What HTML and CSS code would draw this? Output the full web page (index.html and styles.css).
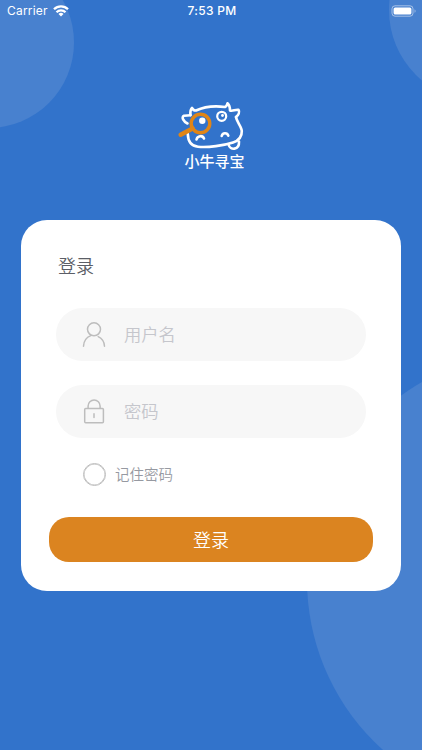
FILE: index.html
```html
<!DOCTYPE html>
<html lang="zh-CN">
<head>
    <meta charset="UTF-8">
    <meta name="viewport" content="width=device-width, initial-scale=1.0">
    <title>登录</title>
    <link rel="stylesheet" href="styles.css">
</head>
<body>
    <div class="login-page">
        <!-- 背景装饰 -->
        <div class="bubble bubble-left"></div>
        <div class="bubble bubble-right"></div>
        <div class="bubble bubble-bottom"></div>

        <!-- 状态栏 -->
        <header class="status-bar">
            <div class="status-left">
                <span class="carrier">Carrier</span>
                <svg class="wifi" width="16" height="12" viewBox="0 0 16 12" fill="none" stroke="#fff" stroke-width="2.3">
                    <path d="M1 4.3a10 10 0 0 1 14 0"/>
                    <path d="M3.5 7.2a6.4 6.4 0 0 1 9 0"/>
                    <path d="M8 11.5 5.5 9a3.6 3.6 0 0 1 5 0z" fill="#fff" stroke="none"/>
                </svg>
            </div>
            <span class="time">7:53 PM</span>
            <div class="status-right">
                <svg width="26" height="12" viewBox="0 0 26 12">
                    <rect x="1" y=".8" width="21" height="10.4" rx="3" fill="none" stroke="#fff" stroke-opacity=".5"/>
                    <rect x="2.6" y="2.4" width="17.8" height="7.2" rx="1.6" fill="#fff"/>
                    <path d="M23.6 4.2v3.6c1.2-.5 1.2-3.1 0-3.6z" fill="#fff" fill-opacity=".55"/>
                </svg>
            </div>
        </header>

        <div class="logo">
            <svg width="82" height="54" viewBox="0 0 82 54" fill="none" stroke-linecap="round" stroke-linejoin="round">
                <g stroke="#fff" stroke-width="2.6">
                    <path d="M20.5 15.2C20.2 12.5 20.500 9.500 22 8C23 9.800 24.200 10.600 26 10.500C34 6.800 46 5.800 55 7C56.200 6.500 57 5 57.500 3.300C59.500 5 60 7.500 60 10.500C63 11.500 65 9.300 68.500 9.800C70 12 68.500 15 66 17"/>
                    <path d="M66 17C66.500 21.500 71.500 26.500 71.800 31C72 36.500 69 40.500 63 42.500C54 45.500 38 47.800 28 46.800C21 46 18 41.500 17.800 34"/>
                    <path d="M20.500 15.200L14 15.700C11 17 13.500 21.500 17.500 23.500"/>
                    <path d="M58.500 44.500C60 50.500 69.500 50.500 69 41.500"/>
                    <circle cx="51.700" cy="16.300" r="4.500" stroke-width="2.2"/>
                    <path d="M26.500 39.500C27.500 35.500 32.500 35 34 38.500"/>
                    <path d="M51.700 36C52.500 32.500 57.300 32.300 58.300 35.700"/>
                </g>
                <circle cx="52.500" cy="15.500" r="1.400" fill="#fff"/>
                <circle cx="30.500" cy="23.500" r="9.300" fill="#3273cb" stroke="#e08516" stroke-width="3.4"/>
                <path d="M22.500 28.500L10.700 34.700" stroke="#e08516" stroke-width="4.6"/>
                <circle cx="32.300" cy="20.700" r="3.200" fill="#fff"/>
            </svg>
            <p class="logo-name">小牛寻宝</p>
        </div>

        <main class="login-card">
            <h1 class="login-title">登录</h1>
            <form class="login-form">
                <label class="input-group">
                    <svg class="input-icon" width="24" height="28" viewBox="0 0 24 28" fill="none" stroke="#bdbdbd" stroke-width="1.5" stroke-linecap="round">
                        <circle cx="12" cy="8.3" r="6.5"/>
                        <path d="M1.500 25.200C1.700 20 4.500 16.300 8.800 14.600M16.200 15.600C20 17.400 22.300 20.600 22.500 25.200"/>
                    </svg>
                    <input type="text" name="username" placeholder="用户名">
                </label>
                <label class="input-group">
                    <svg class="input-icon" width="24" height="28" viewBox="0 0 24 28" fill="none" stroke="#bdbdbd" stroke-width="1.5" stroke-linecap="round">
                        <rect x="2.7" y="10.5" width="18.7" height="14.2" rx="1"/>
                        <path d="M6.100 10.300V8a6 6 0 0 1 12 0V10.300M12 15.800v3.800"/>
                    </svg>
                    <input type="password" name="password" placeholder="密码">
                </label>
                <label class="remember">
                    <input type="checkbox" name="remember">
                    <span>记住密码</span>
                </label>
                <button type="button" class="login-button">登录</button>
            </form>
        </main>
    </div>
</body>
</html>
```
FILE: styles.css
```css
* {
    margin: 0;
    padding: 0;
    box-sizing: border-box;
}

body {
    font-family: "Noto Sans CJK SC", sans-serif;
    background: #3273cb;
}

.login-page {
    position: relative;
    height: 750px;
    overflow: hidden;
}

.bubble {
    position: absolute;
    border-radius: 50%;
    background: #4881cf;
}

.bubble-left {
    left: -97px;
    top: -43px;
    width: 171px;
    height: 171px;
}

.bubble-right {
    left: 389px;
    top: -82px;
    width: 184px;
    height: 184px;
}

.bubble-bottom {
    left: 306.5px;
    top: 352px;
    width: 456px;
    height: 456px;
}

.status-bar {
    position: relative;
    display: grid;
    grid-template-columns: 1fr auto 1fr;
    align-items: center;
    height: 22px;
    padding: 0 5px 0 7px;
    color: #ffffff;
    font-family: Inter, sans-serif;
    font-size: 12px;
    line-height: 22px;
}

.status-left {
    display: flex;
    align-items: center;
    gap: 5px;
}

.carrier {
    letter-spacing: 0.2px;
}

.time {
    font-weight: 500;
    letter-spacing: 0.3px;
}

.status-right {
    display: flex;
    justify-content: flex-end;
}

.logo {
    position: relative;
    display: flex;
    flex-direction: column;
    align-items: center;
    height: 198px;
    padding-top: 78px;
}

.logo-name {
    margin-top: -2px;
    padding-left: 7px;
    color: #ffffff;
    font-size: 15px;
    font-weight: 500;
    line-height: 18px;
}

.login-card {
    position: relative;
    width: 380px;
    height: 371px;
    margin: 0 auto;
    padding: 31px 28px 0;
    border-radius: 26px;
    background: #ffffff;
}

.login-title {
    margin-left: 9px;
    color: #5b5e66;
    font-size: 18px;
    font-weight: 350;
    line-height: 28px;
}

.login-form {
    display: flex;
    flex-direction: column;
    margin-top: 29px;
}

.input-group {
    display: flex;
    align-items: center;
    height: 53px;
    margin: 0 7px 24px;
    padding: 0 26px;
    border-radius: 27px;
    background: #f7f7f7;
}

.input-icon {
    flex: none;
}

.input-group input {
    width: 100%;
    margin-left: 18px;
    padding-bottom: 2px;
    border: none;
    outline: none;
    background: none;
    font-family: inherit;
    font-size: 17.3px;
    font-weight: 350;
}

.input-group input::placeholder {
    color: #c5c6cc;
}

.remember {
    display: flex;
    align-items: center;
    gap: 9px;
    height: 26px;
    margin: -1px 0 0 34px;
    color: #9699a1;
    font-size: 14.5px;
    font-weight: 350;
}

.remember span {
    padding-bottom: 1px;
}

.remember input {
    appearance: none;
    width: 23px;
    height: 23px;
    border: 1px solid #bdbdbd;
    border-radius: 50%;
    box-shadow: inset 0 0 0 0.5px #bdbdbd;
}

.login-button {
    height: 45px;
    margin-top: 30px;
    padding-bottom: 2px;
    border: none;
    border-radius: 20px;
    background: #db8420;
    color: #ffffff;
    font-family: inherit;
    font-size: 18px;
    font-weight: 350;
    cursor: pointer;
}
```
